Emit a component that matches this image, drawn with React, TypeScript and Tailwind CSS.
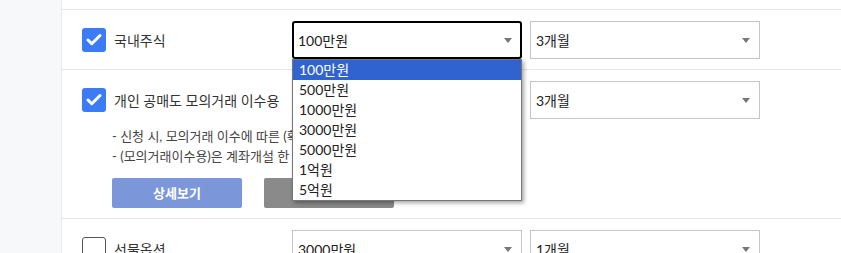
import { Check } from "lucide-react";

const amounts = ["100만원", "500만원", "1000만원", "3000만원", "5000만원", "1억원", "5억원"];

function Box({ checked }: { checked: boolean }) {
  if (checked) {
    return (
      <span className="flex h-6 w-6 shrink-0 items-center justify-center rounded-[3px] bg-[#3b7cf5]">
        <Check className="h-[18px] w-[18px] text-white" strokeWidth={4} />
      </span>
    );
  }
  return <span className="h-6 w-6 shrink-0 rounded-[3px] border border-[#555] bg-white" />;
}

function Select({ value, focused }: { value: string; focused?: boolean }) {
  return (
    <div
      className={
        focused
          ? "flex h-[38px] w-[230px] items-center justify-between rounded-[3px] border-2 border-black pl-[4px] pr-[8px] text-[14px] text-[#222]"
          : "flex h-[38px] w-[230px] items-center justify-between border border-[#c4c4c4] pl-[5px] pr-[9px] text-[14px] text-[#222]"
      }
    >
      <span>{value}</span>
      <svg width="8" height="5" viewBox="0 0 8 5">
        <path d="M0 0h8L4 5z" fill="#777" />
      </svg>
    </div>
  );
}

function Row({
  checked,
  label,
  amount,
  period,
  focused,
  children,
}: {
  checked: boolean;
  label: string;
  amount: string;
  period: string;
  focused?: boolean;
  children?: React.ReactNode;
}) {
  return (
    <div className="border-b border-[#e5e5e5] pt-[11px] pb-[10px] pl-5">
      <div className="flex items-center">
        <div className="flex w-[210px] items-center gap-2 text-[14px] text-[#333]">
          <Box checked={checked} />
          <span>{label}</span>
        </div>
        <div className="flex gap-2">
          <Select value={amount} focused={focused} />
          <Select value={period} />
        </div>
      </div>
      {children}
    </div>
  );
}

export default function App() {
  return (
    <div
      className="relative flex h-[253px] w-[841px] overflow-hidden bg-white"
      style={{ fontFamily: "Lato, 'Noto Sans CJK KR', sans-serif" }}
    >
      <div className="w-[62px] shrink-0 border-r border-[#e8e8e8] bg-[#f7f8fa]" />
      <div className="flex-1">
        <div className="h-[10px] border-b border-[#e5e5e5]" />
        <Row checked label="국내주식" amount="100만원" period="3개월" focused />
        <Row checked label="개인 공매도 모의거래 이수용" amount="100만원" period="3개월">
          <div className="pl-[30px] pt-[7px] text-[13px] leading-[20px] text-[#444]">
            <p>- 신청 시, 모의거래 이수에 따른 (확인서) 발급</p>
            <p>- (모의거래이수용)은 계좌개설 한 후 이용 가능</p>
            <div className="mt-3 flex gap-[22px]">
              <button className="h-[30px] w-[130px] rounded-[2px] bg-[#7b96d9] text-[13px] font-bold text-white">
                상세보기
              </button>
              <button className="h-[30px] w-[130px] rounded-[2px] bg-[#8a8a8a] text-[13px] font-bold text-white">
                신청하기
              </button>
            </div>
          </div>
        </Row>
        <Row checked={false} label="선물옵션" amount="3000만원" period="1개월" />
      </div>

      <ul className="absolute left-[292px] top-[59px] w-[230px] border border-[#767676] bg-white py-0 text-[14px] leading-[20px] text-[#222] shadow-[2px_2px_4px_rgba(0,0,0,0.35)]">
        {amounts.map((a, i) => (
          <li key={a} className={i === 0 ? "bg-[#3163d0] pl-[6px] text-white" : "pl-[6px]"}>
            {a}
          </li>
        ))}
      </ul>
    </div>
  );
}
